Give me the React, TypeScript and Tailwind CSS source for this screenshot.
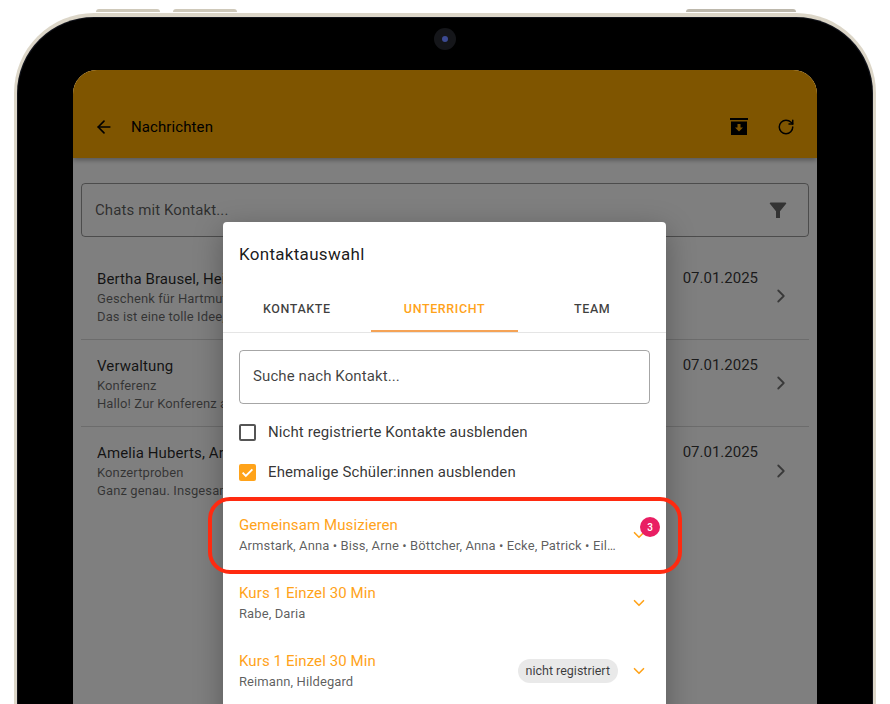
import { ArrowLeft, ChevronDown, ChevronRight, RotateCw } from "lucide-react"

const chats = [
  { name: "Bertha Brausel, Heinz Brausel", subject: "Geschenk für Hartmut", text: "Das ist eine tolle Idee, vielen Dank dafür!" },
  { name: "Verwaltung", subject: "Konferenz", text: "Hallo! Zur Konferenz am Freitag sind alle eingeladen." },
  { name: "Amelia Huberts, Arne Biss", subject: "Konzertproben", text: "Ganz genau. Insgesamt sind es drei Proben." },
]

const groups = [
  { title: "Kurs 1 Einzel 30 Min", sub: "Rabe, Daria", chip: false },
  { title: "Kurs 1 Einzel 30 Min", sub: "Reimann, Hildegard", chip: true },
]

function ArchiveIcon() {
  return (
    <svg viewBox="0 0 24 24" className="size-[24px]" fill="currentColor">
      <path d="M3 3h18v2H3z" />
      <path fillRule="evenodd" d="M4 6.5h16V20H4zM10.5 9v3.5H8l4 4 4-4h-2.5V9z" />
    </svg>
  )
}

function FilterIcon() {
  return (
    <svg viewBox="0 0 24 24" className="size-[24px]" fill="currentColor">
      <path d="M4.5 4.5h15a.8.8 0 0 1 .6 1.3L14 13.2V20h-4v-6.8L3.9 5.8a.8.8 0 0 1 .6-1.3z" />
    </svg>
  )
}

function ChatRow({ name, subject, text }: { name: string; subject: string; text: string }) {
  return (
    <div className="flex h-[87px] items-center border-b border-black/15 pr-[17px] pl-[16px] last:border-b-0">
      <div className="min-w-0 flex-1 pt-[2px]">
        <div className="truncate text-[15px] leading-[21px] tracking-[0.1px] text-black/85">{name}</div>
        <div className="truncate text-[13px] leading-[18px] tracking-[0.1px] text-black/60">{subject}</div>
        <div className="truncate text-[13px] leading-[18px] tracking-[0.1px] text-black/60">{text}</div>
      </div>
      <div className="mb-[36px] ml-4 text-[15px] text-black/80">07.01.2025</div>
      <ChevronRight className="ml-[12px] size-[22px] text-black/55" strokeWidth={2} />
    </div>
  )
}

function Check({ checked, label }: { checked: boolean; label: string }) {
  return (
    <div className="flex h-[40px] items-center gap-[12px]">
      {checked ? (
        <span className="flex size-[17px] items-center justify-center rounded-[2px] bg-[#ffa31a]">
          <svg viewBox="0 0 16 16" className="size-[15px]" fill="none" stroke="white" strokeWidth="2">
            <path d="M2.8 8.2l3.4 3.4 7-7" />
          </svg>
        </span>
      ) : (
        <span className="size-[17px] rounded-[2px] border-2 border-[#555]" />
      )}
      <span className="text-[15px] tracking-[0.1px] text-black/80">{label}</span>
    </div>
  )
}

function GroupRow({ title, sub, chip }: { title: string; sub: string; chip: boolean }) {
  return (
    <div className="flex h-[68px] items-center pr-[16px] pl-[16px]">
      <div className="min-w-0 flex-1">
        <div className="truncate text-[15px] leading-[21px] tracking-[0.1px] text-[#ffa31a]">{title}</div>
        <div className="truncate text-[13px] leading-[19px] tracking-[0.1px] text-black/65">{sub}</div>
      </div>
      {chip && (
        <span className="mr-[12px] flex h-[24px] items-center rounded-full bg-[#e9e9e9] px-[8px] text-[12.5px] text-black/75">
          nicht registriert
        </span>
      )}
      <ChevronDown className="mr-[2px] size-[18px] text-[#ffa31a]" strokeWidth={2.2} />
    </div>
  )
}

export default function App() {
  return (
    <div className="relative h-[704px] w-[890px] overflow-hidden bg-white px-[14px] pt-[13px] font-['Roboto',sans-serif]">
      {/* volume and power buttons on the top edge */}
      <div className="absolute top-[9px] left-[96px] h-[3px] w-[64px] rounded-t-sm bg-[#cfc9ba]" />
      <div className="absolute top-[9px] left-[173px] h-[3px] w-[64px] rounded-t-sm bg-[#cfc9ba]" />
      <div className="absolute top-[9px] left-[686px] h-[3px] w-[110px] rounded-t-sm bg-[#bdb8ac]" />

      <div className="h-[720px] rounded-t-[80px] border-x-[3px] border-t-[4px] border-[#dcd6c8] bg-[#12141c] p-px">
        <div className="relative h-full rounded-t-[76px] bg-black px-[55px] pt-[52px]">
          {/* camera */}
          <div className="absolute top-[10px] left-1/2 flex size-[22px] -translate-x-1/2 items-center justify-center rounded-full bg-[#15161a]">
            <span className="size-[6px] rounded-full bg-[#3c4a92]" />
          </div>

          <div className="relative h-full overflow-hidden rounded-t-[24px] bg-white">
            <header className="flex h-[88px] items-center bg-[#ffaa00] pt-[26px] pr-[22px] pl-[21px] text-black shadow-[0_2px_5px_rgba(0,0,0,0.35)]">
              <ArrowLeft className="size-[20px]" strokeWidth={2} />
              <span className="ml-[17px] flex-1 text-[15px] tracking-[0.1px]">Nachrichten</span>
              <ArchiveIcon />
              <RotateCw className="ml-[26px] size-[18px]" strokeWidth={2} />
            </header>

            <div className="px-[8px] pt-[25px]">
              <div className="flex h-[54px] items-center justify-between rounded-[4px] border border-black/40 pr-[18px] pl-[13px]">
                <span className="text-[15px] tracking-[0.1px] text-black/65">Chats mit Kontakt...</span>
                <span className="text-black/60">
                  <FilterIcon />
                </span>
              </div>
            </div>

            <div className="px-[8px] pt-[16px]">
              {chats.map((chat) => (
                <ChatRow key={chat.subject} {...chat} />
              ))}
            </div>

            <div className="absolute inset-0 bg-black/50" />

            {/* dialog */}
            <div className="absolute top-[152px] left-[150px] h-[600px] w-[443px] rounded-t-[4px] bg-white shadow-[0_8px_30px_rgba(0,0,0,0.3)]">
              <h2 className="pt-[21px] pl-[16px] text-[17px] leading-[22px] tracking-[0.3px] text-black/90">
                Kontaktauswahl
              </h2>
              <div className="mt-[21px] flex h-[47px] border-b border-black/10">
                <div className="flex flex-1 items-center justify-center text-[12.5px] font-medium tracking-[0.6px] text-black/75">
                  KONTAKTE
                </div>
                <div className="flex flex-1 items-center justify-center border-b-2 border-[#f5a356] pt-[2px] text-[12.5px] font-medium tracking-[0.6px] text-[#ffa31a]">
                  UNTERRICHT
                </div>
                <div className="flex flex-1 items-center justify-center text-[12.5px] font-medium tracking-[0.6px] text-black/75">
                  TEAM
                </div>
              </div>

              <div className="px-[16px] pt-[17px]">
                <div className="flex h-[54px] items-center rounded-[4px] border border-black/35 px-[13px] pb-[2px] text-[15px] tracking-[0.1px] text-black/75">
                  Suche nach Kontakt...
                </div>
                <div className="pt-[8px]">
                  <Check checked={false} label="Nicht registrierte Kontakte ausblenden" />
                  <Check checked label="Ehemalige Schüler:innen ausblenden" />
                </div>
              </div>

              <div className="pt-[9px]">
                <div className="relative flex h-[68px] items-center pr-[16px] pl-[16px]">
                  <div className="min-w-0 flex-1">
                    <div className="truncate text-[15px] leading-[21px] tracking-[0.1px] text-[#ffa31a]">
                      Gemeinsam Musizieren
                    </div>
                    <div className="w-[379px] truncate text-[13px] leading-[19px] tracking-[0.1px] text-black/65">
                      Armstark, Anna • Biss, Arne • Böttcher, Anna • Ecke, Patrick • Eilers, Jan
                    </div>
                  </div>
                  <ChevronDown className="mr-[2px] size-[18px] text-[#ffa31a]" strokeWidth={2.2} />
                  <span className="absolute top-[16px] right-[6px] flex size-[20px] items-center justify-center rounded-full bg-[#e91e63] text-[10px] font-medium text-white">
                    3
                  </span>
                </div>
                {groups.map((group) => (
                  <GroupRow key={group.sub} {...group} />
                ))}
              </div>
            </div>
          </div>
        </div>
      </div>

      {/* red highlight drawn over the screenshot */}
      <div className="absolute top-[497px] left-[208px] h-[77px] w-[474px] rounded-[22px] border-[4px] border-[#ff2a10]" />
    </div>
  )
}
